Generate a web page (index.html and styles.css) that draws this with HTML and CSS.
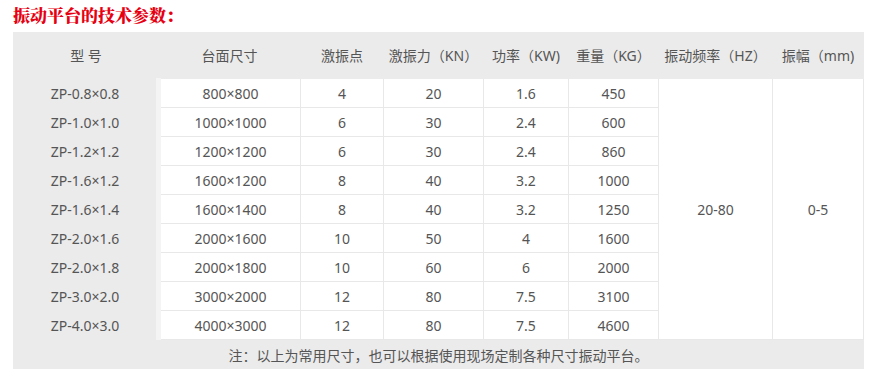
FILE: index.html
```html
<!DOCTYPE html>
<html lang="zh">
<head>
  <meta charset="UTF-8">
  <title>振动平台的技术参数</title>
  <link rel="stylesheet" href="styles.css">
</head>
<body>
  <h2 class="title">振动平台的技术参数：</h2>
  <table class="spec">
    <thead>
      <tr>
        <th class="c1">型 号</th>
        <th class="c2">台面尺寸</th>
        <th class="c3">激振点</th>
        <th class="c4">激振力（KN）</th>
        <th class="c5">功率（KW)</th>
        <th class="c6">重量（KG）</th>
        <th class="c7">振动频率（HZ）</th>
        <th class="c8">振幅（mm)</th>
      </tr>
    </thead>
    <tbody>
      <tr><td class="model">ZP-0.8×0.8</td><td>800×800</td><td>4</td><td>20</td><td>1.6</td><td>450</td><td rowspan="9">20-80</td><td rowspan="9">0-5</td></tr>
      <tr><td class="model">ZP-1.0×1.0</td><td>1000×1000</td><td>6</td><td>30</td><td>2.4</td><td>600</td></tr>
      <tr><td class="model">ZP-1.2×1.2</td><td>1200×1200</td><td>6</td><td>30</td><td>2.4</td><td>860</td></tr>
      <tr><td class="model">ZP-1.6×1.2</td><td>1600×1200</td><td>8</td><td>40</td><td>3.2</td><td>1000</td></tr>
      <tr><td class="model">ZP-1.6×1.4</td><td>1600×1400</td><td>8</td><td>40</td><td>3.2</td><td>1250</td></tr>
      <tr><td class="model">ZP-2.0×1.6</td><td>2000×1600</td><td>10</td><td>50</td><td>4</td><td>1600</td></tr>
      <tr><td class="model">ZP-2.0×1.8</td><td>2000×1800</td><td>10</td><td>60</td><td>6</td><td>2000</td></tr>
      <tr><td class="model">ZP-3.0×2.0</td><td>3000×2000</td><td>12</td><td>80</td><td>7.5</td><td>3100</td></tr>
      <tr><td class="model">ZP-4.0×3.0</td><td>4000×3000</td><td>12</td><td>80</td><td>7.5</td><td>4600</td></tr>
    </tbody>
    <tfoot>
      <tr><td colspan="8">注：以上为常用尺寸，也可以根据使用现场定制各种尺寸振动平台。</td></tr>
    </tfoot>
  </table>
</body>
</html>
```

FILE: styles.css
```css
body {
  margin: 0;
  padding: 5px 0 0 13px;
  font-family: "Noto Sans", "Noto Sans CJK SC", sans-serif;
  color: #555;
  background: #fff;
}
.title {
  margin: 0 0 7px;
  font-size: 17px;
  line-height: 20px;
  font-weight: 900;
  color: #e60012;
  font-family: "Noto Serif CJK SC", "Noto Sans CJK SC", serif;
}
.spec {
  border-collapse: collapse;
  table-layout: fixed;
  width: 850px;
  background: #ebebeb;
  font-size: 14px;
}
.spec th, .spec td {
  padding: 0;
  text-align: center;
  font-weight: normal;
  white-space: nowrap;
}
.spec th {
  height: 46px;
  border-bottom: 1px solid #ebebeb;
}
.spec tbody td {
  height: 28px;
  background: #fff;
  border: 1px solid #e8e8e8;
}
.spec tbody td.model {
  background: #ebebeb;
  border-color: #ebebeb;
  border-right: 5px solid #f4f4f4;
}
.spec tfoot td {
  height: 29px;
  background: #ebebeb;
}
.c1 { width: 145px; }
.c2 { width: 142px; }
.c3 { width: 83px; }
.c4 { width: 100px; }
.c5 { width: 85px; }
.c6 { width: 90px; }
.c7 { width: 114px; }
.c8 { width: 91px; }
```
